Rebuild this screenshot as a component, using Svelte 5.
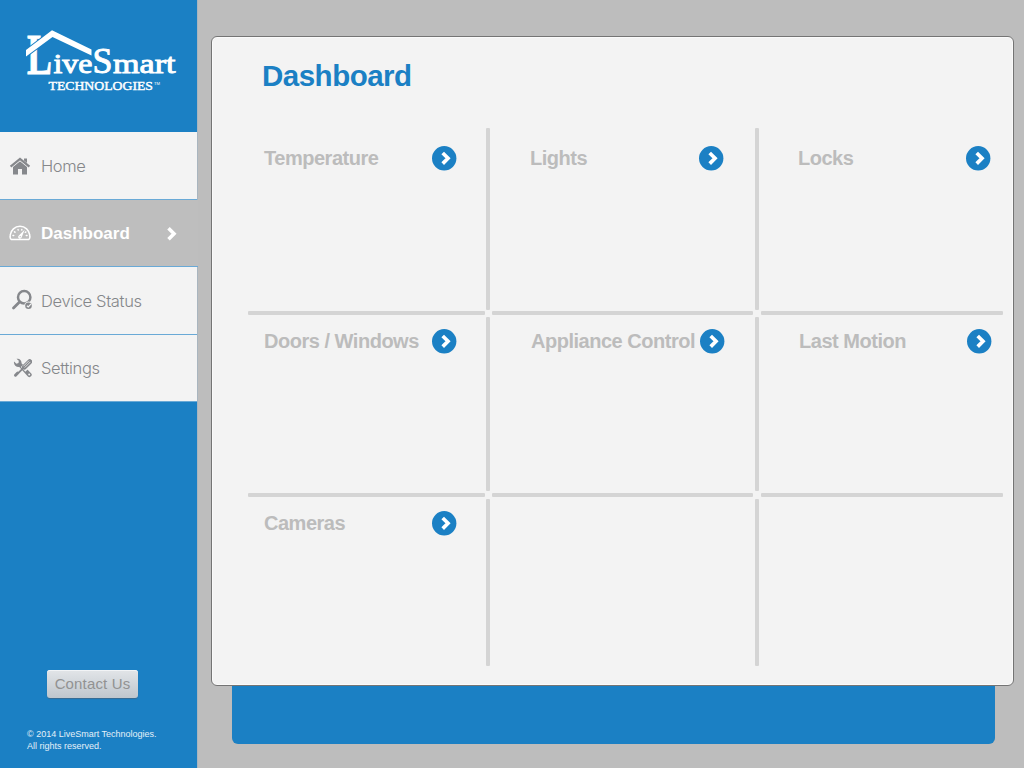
<script>
  const nav = [
    { label: 'Home', icon: 'home' },
    { label: 'Dashboard', icon: 'gauge', active: true },
    { label: 'Device Status', icon: 'search' },
    { label: 'Settings', icon: 'tools' }
  ];
  const tiles = [
    { label: 'Temperature', col: 1, row: 1 },
    { label: 'Lights', col: 2, row: 1 },
    { label: 'Locks', col: 3, row: 1 },
    { label: 'Doors / Windows', col: 1, row: 2 },
    { label: 'Appliance Control', col: 2, row: 2 },
    { label: 'Last Motion', col: 3, row: 2 },
    { label: 'Cameras', col: 1, row: 3 }
  ];
  const tracks = [1, 3, 5];
  const gaps = [2, 4];
</script>

<div class="app">
  <aside>
    <header>
      <svg class="logo" width="160" height="70" viewBox="20 26 160 70" role="img" aria-label="LiveSmart Technologies">
        <g fill="#fff">
          <text x="27" y="73.5" font-size="57" textLength="25" lengthAdjust="spacingAndGlyphs" class="brand initial">L</text>
          <text x="53.5" y="73.3" font-size="27.5" textLength="39" lengthAdjust="spacingAndGlyphs" class="brand">ive</text>
          <text x="92.5" y="73.3" font-size="35" textLength="20" lengthAdjust="spacingAndGlyphs" class="brand">S</text>
          <text x="113" y="73.3" font-size="27.5" textLength="62.500" lengthAdjust="spacingAndGlyphs" class="brand">mart</text>
          <path d="M26 50 52 30.300 91.500 49.500V55.500L52.500 37 26 56.500Z" stroke="#1b80c4" stroke-width="2" paint-order="stroke" />
          <text x="48.500" y="90.300" font-size="12.500" textLength="104.500" lengthAdjust="spacingAndGlyphs" class="brand small">TECHNOLOGIES</text>
          <text x="154" y="85" font-size="4" textLength="6" lengthAdjust="spacingAndGlyphs" class="mark">TM</text>
        </g>
      </svg>
    </header>
    <nav>
      {#each nav as item}
        <a href="#{item.icon}" class:active={item.active}>
          <svg class="icon" width="24" height="24" viewBox="0 0 24 24">
            {#if item.icon === 'home'}
              <path fill="#86888c" d="M5 12.500 12 6.800 19 12.500V20.500H14V15H10V20.500H5Z" />
              <path fill="none" stroke="#f3f3f3" stroke-width="4.200" d="M1.500 13 12 4.500 22.500 13" />
              <path fill="#86888c" d="M16 4.500H19V9L16 6.500Z" />
              <path fill="none" stroke="#86888c" stroke-width="2.300" d="M2.600 12.600 12 4.900 21.400 12.600" />
            {:else if item.icon === 'gauge'}
              <path fill="none" stroke="#fff" stroke-width="1.500" d="M3.400 18.600C1.900 17.700 2 15.500 2.200 14.200 2.800 9.300 6.900 5.200 12 5.200S21.200 9.300 21.800 14.200C22 15.500 22.100 17.700 20.600 18.600Z" />
              <path fill="none" stroke="#fff" stroke-width="1.500" stroke-linecap="round" d="M5 14.600H5.700M6.500 10.800 7 11.200M10 8.600 10.200 9M13.800 8.600 13.700 9M18.300 14.600H19M17.800 11 17.300 11.300" />
              <path fill="#fff" d="M16.800 8.500 13.700 16.200A1.800 1.800 0 1 1 10.900 14.400Z" />
              <circle cx="12.200" cy="15.700" r=".65" fill="#bebebe" />
            {:else if item.icon === 'search'}
              <circle cx="16.200" cy="8.300" r="6.200" fill="none" stroke="#86888c" stroke-width="2.500" />
              <path fill="none" stroke="#86888c" stroke-width="2.800" stroke-linecap="round" d="M11.500 13 5.500 19" />
              <circle cx="20.500" cy="16.700" r="4.200" fill="#f3f3f3" />
              <circle cx="20.500" cy="16.700" r="3.300" fill="#86888c" />
              <path fill="none" stroke="#f3f3f3" stroke-width="1.200" d="M18.900 16.700 20.300 18 23 14.900" />
            {:else}
              <g transform="translate(2.500 0)">
                <path fill="#86888c" d="M3.500 5.600 6 7.700 8 7 8.300 4.800 6 2.800C9 2.100 11.300 4.200 11 7.200L20.500 17.200A2.200 2.200 0 0 1 17.400 20.400L8.800 10.900C5.500 11.200 3 9 3.500 5.600Z" />
                <path fill="none" stroke="#f3f3f3" stroke-width="6.500" d="M20.500 5.500 12.600 13.400" />
                <path fill="none" stroke="#86888c" stroke-width="5" stroke-linecap="round" d="M19.200 5.700 13.900 11" />
                <path fill="none" stroke="#f3f3f3" stroke-width=".8" d="M19.900 5.900 14.200 11.600M18.500 4.700 12.900 10.300" />
                <path fill="none" stroke="#86888c" stroke-width="1.800" d="M12.500 12.400 7.700 17.200" />
                <path fill="none" stroke="#86888c" stroke-width="3" stroke-linecap="round" d="M7.200 17 5 19.200" />
                <circle cx="18.700" cy="18.500" r="1" fill="#f3f3f3" />
              </g>
            {/if}
          </svg>
          <span>{item.label}</span>
          {#if item.active}
            <svg class="more" width="12" height="16" viewBox="0 0 12 16">
              <path fill="none" stroke="#fff" stroke-width="3.600" d="M2.500 3.300 8 8.800 2.500 14.300" />
            </svg>
          {/if}
        </a>
      {/each}
    </nav>
    <footer>
      <button>Contact Us</button>
      <p>© 2014 LiveSmart Technologies.<br />All rights reserved.</p>
    </footer>
  </aside>

  <main>
    <section class="panel">
      <h1>Dashboard</h1>
      <div class="grid">
        {#each tiles as tile}
          <div class="tile c{tile.col} r{tile.row}" style:grid-area="{tile.row * 2 - 1} / {tile.col * 2 - 1}">
            <h2>{tile.label}</h2>
            <svg width="25" height="25" viewBox="0 0 25 25">
              <circle cx="12.200" cy="12.300" r="12.200" fill="#1b80c4" />
              <path fill="none" stroke="#fff" stroke-width="3.700" d="M10.700 7 16 12.300 10.700 17.600" />
            </svg>
          </div>
        {/each}
        {#each tracks as t}
          {#each gaps as g}
            <i class="vline g{g}" style:grid-area="{t} / {g}"></i>
            <i class="hline g{g}" style:grid-area="{g} / {t}"></i>
          {/each}
        {/each}
      </div>
    </section>
    <div class="base"></div>
  </main>
</div>

<style>
  :global(body) {
    margin: 0;
  }
  .app {
    display: flex;
    width: 1024px;
    height: 768px;
    overflow: hidden;
    background: #bdbdbd;
    font-family: "Liberation Sans", Arial, sans-serif;
  }
  aside {
    display: flex;
    flex-direction: column;
    box-sizing: border-box;
    width: 198px;
    background: #1b80c4;
    border-right: 1px solid #a9b5bf;
  }
  header {
    height: 132px;
    box-sizing: border-box;
    padding: 26px 0 0 20px;
  }
  .logo {
    display: block;
    overflow: visible;
  }
  .brand {
    font-family: "Liberation Serif", "Times New Roman", serif;
    stroke: #fff;
    stroke-width: 0.9px;
  }
  .brand.initial {
    font-weight: bold;
    stroke-width: 0.8px;
  }
  .brand.small {
    stroke-width: 0.4px;
  }
  nav {
    height: 270px;
  }
  nav a {
    display: flex;
    align-items: center;
    box-sizing: border-box;
    width: 197px;
    height: 68px;
    padding-left: 8px;
    background: #f3f3f3;
    border-bottom: 1px solid #69a9d6;
    color: #85878a;
    font: 300 16.500px Inter, "Liberation Sans", sans-serif;
    letter-spacing: -0.35px;
    text-decoration: none;
  }
  nav a:nth-child(even) {
    height: 67px;
  }
  nav a span {
    margin-left: 9px;
  }
  nav a.active {
    width: 198px;
    background: #bebebe;
    color: #fff;
    font: bold 17px "Liberation Sans", Arial, sans-serif;
    letter-spacing: 0;
  }
  nav a.active span {
    padding-top: 2px;
  }
  .more {
    margin-left: 36px;
  }
  footer {
    flex: 1;
    padding: 268px 0 0 27px;
  }
  button {
    display: block;
    width: 91px;
    height: 28px;
    margin-left: 20px;
    padding: 0 0 2px;
    border: 0;
    border-radius: 3px;
    background: linear-gradient(#e2e5e8, #bfc6cd);
    box-shadow: 0 1px 1px #3b6a90, inset 0 1px 0 #f2f4f6;
    color: #929292;
    font: 15px "Liberation Sans", Arial, sans-serif;
    letter-spacing: 0.15px;
    white-space: nowrap;
  }
  p {
    margin: 30px 0 0;
    color: #e4f0f8;
    font-size: 9px;
    line-height: 12px;
    white-space: nowrap;
  }
  main {
    flex: 1;
    padding: 36px 0 0 13px;
  }
  .panel {
    position: relative;
    box-sizing: border-box;
    width: 803px;
    height: 649.500px;
    padding: 23px 0 0 36px;
    border: 1px solid #747474;
    border-radius: 6px;
    background: #f3f3f3;
    box-shadow: inset 0 0 0 1px #fafafa;
  }
  h1 {
    margin: 0 0 0 14px;
    height: 68px;
    color: #1b80c4;
    font-size: 29.500px;
    line-height: 31px;
    letter-spacing: -0.5px;
  }
  .grid {
    display: grid;
    grid-template-columns: 237px 7px 261px 8px 242px;
    grid-template-rows: 182px 7px 174px 8px 167px;
  }
  .tile {
    display: flex;
    align-items: center;
    justify-content: space-between;
    align-self: start;
    height: 25px;
    margin-top: 12px;
    padding: 0 28px 0 16px;
  }
  .tile.r1 {
    margin-top: 18px;
  }
  .tile.c2 {
    padding: 0 28px 0 39px;
  }
  .tile.c3 {
    padding: 0 11.500px 0 38px;
  }
  .tile.c2.r1 {
    padding: 0 29.500px 0 38px;
  }
  .tile.c3.r1 {
    padding: 0 12.500px 0 37px;
  }
  h2 {
    margin: 0;
    padding-bottom: 2px;
    color: #bcbcbc;
    font-size: 20px;
    line-height: 24px;
    letter-spacing: -0.48px;
    white-space: nowrap;
  }
  .vline {
    justify-self: center;
    width: 3.500px;
    border-radius: 1px;
    background: #d4d4d4;
  }
  .vline.g2 {
    justify-self: start;
    margin-left: 1px;
  }
  .hline {
    align-self: center;
    height: 3.500px;
    border-radius: 1px;
    background: #d4d4d4;
  }
  .hline.g2 {
    align-self: start;
    margin-top: 1px;
  }
  .base {
    width: 763px;
    height: 58.500px;
    margin-left: 21px;
    border-radius: 0 0 6px 6px;
    background: #1b80c4;
    box-shadow: 0 0 1px #c9b8ac;
  }
</style>
